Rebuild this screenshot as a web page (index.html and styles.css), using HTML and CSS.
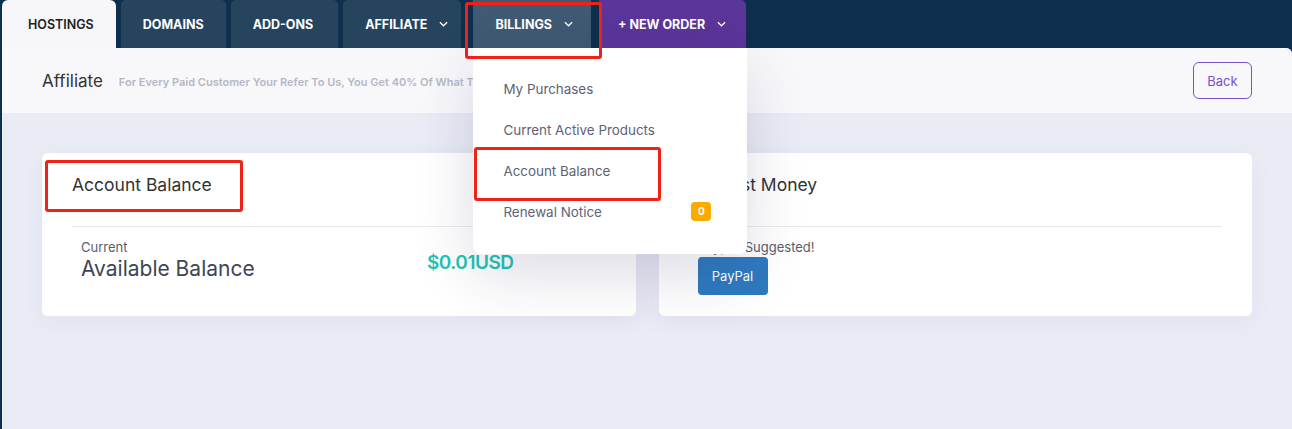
FILE: index.html
```html
<!DOCTYPE html>
<html lang="en">

<head>
    <meta charset="utf-8">
    <meta name="viewport" content="width=device-width, initial-scale=1.0">
    <title>Affiliate</title>
    <link rel="stylesheet" href="styles.css">
</head>

<body>
    <header>
        <nav class="tabs">
            <a class="tab aktiv">HOSTINGS</a>
            <a class="tab">DOMAINS</a>
            <a class="tab tab-addons">ADD-ONS</a>
            <a class="tab tab-affiliate">AFFILIATE
                <svg class="chev" viewBox="0 0 10 6"><path d="M1 1l4 4 4-4"/></svg>
            </a>
            <div class="tab tab-billing">BILLINGS
                <svg class="chev" viewBox="0 0 10 6"><path d="M1 1l4 4 4-4"/></svg>
                <ul class="dropdown">
                    <li>My Purchases</li>
                    <li>Current Active Products</li>
                    <li>Account Balance</li>
                    <li>Renewal Notice <span class="badge">0</span></li>
                </ul>
            </div>
            <a class="tab tab-order">+ NEW ORDER
                <svg class="chev" viewBox="0 0 10 6"><path d="M1 1l4 4 4-4"/></svg>
            </a>
        </nav>
    </header>

    <main class="panel">
        <section class="page-head">
            <h1>Affiliate</h1>
            <p class="sub">For Every Paid Customer Your Refer To Us, You Get 40% Of What They Pay</p>
            <button class="back">Back</button>
        </section>

        <section class="cards">
            <article class="card">
                <h2>Account Balance</h2>
                <div class="card-body balance">
                    <div>
                        <p class="small">Current</p>
                        <p class="big">Available Balance</p>
                    </div>
                    <p class="amount">$0.01USD</p>
                </div>
            </article>
            <article class="card">
                <h2>Request Money</h2>
                <div class="card-body">
                    <p class="small">Paypal-Suggested!</p>
                    <button class="paypal">PayPal</button>
                </div>
            </article>
        </section>
    </main>

    <!-- markeringer -->
    <div class="mark mark-billing"></div>
    <div class="mark mark-menu"></div>
    <div class="mark mark-title"></div>
</body></html>
```

FILE: styles.css
```css
* {
    box-sizing: border-box;
}

body {
    margin: 0;
    height: 429px;
    overflow: hidden;
    background-color: #0e2f4e;
    font-family: 'Inter', 'Open Sans', sans-serif;
    display: flex;
    flex-direction: column;
}

.tabs {
    display: flex;
    gap: 5px;
    height: 48px;
    padding-left: 2px;
}

.tab {
    display: flex;
    align-items: center;
    padding: 0 22px;
    background-color: #27445f;
    color: #fff;
    font-size: 12.5px;
    font-weight: 700;
    border-radius: 5px 5px 0 0;
    cursor: pointer;
}

.tab.aktiv {
    background-color: #f7f7fb;
    color: #222;
    font-weight: 600;
    padding: 0 22px 0 26px;
    border-radius: 6px 6px 0 0;
}

.tab-addons {
    padding-right: 25px;
}

.tab-affiliate {
    padding-right: 13px;
}

.tab-billing {
    position: relative;
    margin-left: 7px;
    padding: 0 18px 0 22px;
    background-color: #3f5a72;
    border-radius: 0;
}

.tab-order {
    margin-left: 3px;
    padding: 0 20px 0 19px;
    background-color: #5b3599;
    border-radius: 0 5px 0 0;
}

.chev {
    width: 9px;
    height: 6px;
    margin-left: 12px;
    fill: none;
    stroke: #fff;
    stroke-width: 1.4;
}

.dropdown {
    position: absolute;
    top: 48px;
    left: 0;
    z-index: 5;
    width: 274px;
    margin: 0;
    padding: 20px 0 22px 0;
    list-style: none;
    background-color: #fff;
    border-radius: 0 0 8px 8px;
    box-shadow: 0 20px 60px rgba(40, 40, 90, 0.16);
}

.dropdown li {
    display: flex;
    align-items: center;
    justify-content: space-between;
    height: 41px;
    padding: 0 36px 0 30px;
    color: #5d6275;
    font-size: 13.4px;
    font-weight: 400;
}

.badge {
    display: inline-block;
    width: 20px;
    height: 19px;
    line-height: 19px;
    text-align: center;
    background-color: #fbab00;
    color: #fff;
    font-size: 10px;
    font-weight: 700;
    border-radius: 4px;
}

.panel {
    flex: 1;
    margin-left: 2px;
    background-color: #e9ebf5;
    border-radius: 0 6px 0 0;
}

.page-head {
    display: flex;
    align-items: center;
    height: 65px;
    padding: 0 40px;
    background-color: #f8f8fb;
    border-radius: 0 6px 0 0;
}

.page-head h1 {
    margin: 0 16px 0 0;
    font-size: 17px;
    font-weight: 400;
    color: #333;
}

.sub {
    flex: 1;
    margin: 2px 0 0 0;
    font-size: 11px;
    font-weight: 600;
    color: #b5b7c6;
}

.back {
    width: 59px;
    height: 37px;
    border: 1px solid #7b4fd0;
    border-radius: 6px;
    background: transparent;
    color: #7b4fd0;
    font-family: inherit;
    font-size: 13px;
    cursor: pointer;
}

.cards {
    display: grid;
    grid-template-columns: 1fr 1fr;
    gap: 23px;
    padding: 40px;
}

.card {
    height: 163px;
    padding: 0 30px;
    background-color: #fff;
    border-radius: 6px;
    box-shadow: 0 6px 24px rgba(60, 60, 120, 0.05);
}

.card h2 {
    margin: 0;
    height: 74px;
    line-height: 64px;
    font-size: 17.5px;
    font-weight: 400;
    color: #333;
    border-bottom: 1px solid #e8e8ee;
}

.card-body {
    padding: 12px 9px 0 9px;
}

.balance {
    display: flex;
    justify-content: space-between;
    padding-right: 92px;
}

.small {
    margin: 0;
    font-size: 13px;
    color: #595d6b;
}

.big {
    margin: 1px 0 0 0;
    font-size: 21px;
    color: #3e4554;
}

.amount {
    margin: 12px 0 0 0;
    font-size: 19px;
    font-weight: 600;
    color: #1fc4b4;
    letter-spacing: -0.5px;
}

.paypal {
    margin-top: 2px;
    width: 70px;
    height: 38px;
    border: none;
    border-radius: 4px;
    background-color: #2e7abf;
    color: #fff;
    font-family: inherit;
    font-size: 13px;
    cursor: pointer;
}

.mark {
    position: absolute;
    z-index: 10;
    border: 3px solid #ef2218;
    border-radius: 3px;
}

.mark-billing {
    left: 465px;
    top: 2px;
    width: 137px;
    height: 57px;
}

.mark-menu {
    left: 474px;
    top: 147px;
    width: 187px;
    height: 54px;
}

.mark-title {
    left: 45px;
    top: 160px;
    width: 198px;
    height: 52px;
}
```
